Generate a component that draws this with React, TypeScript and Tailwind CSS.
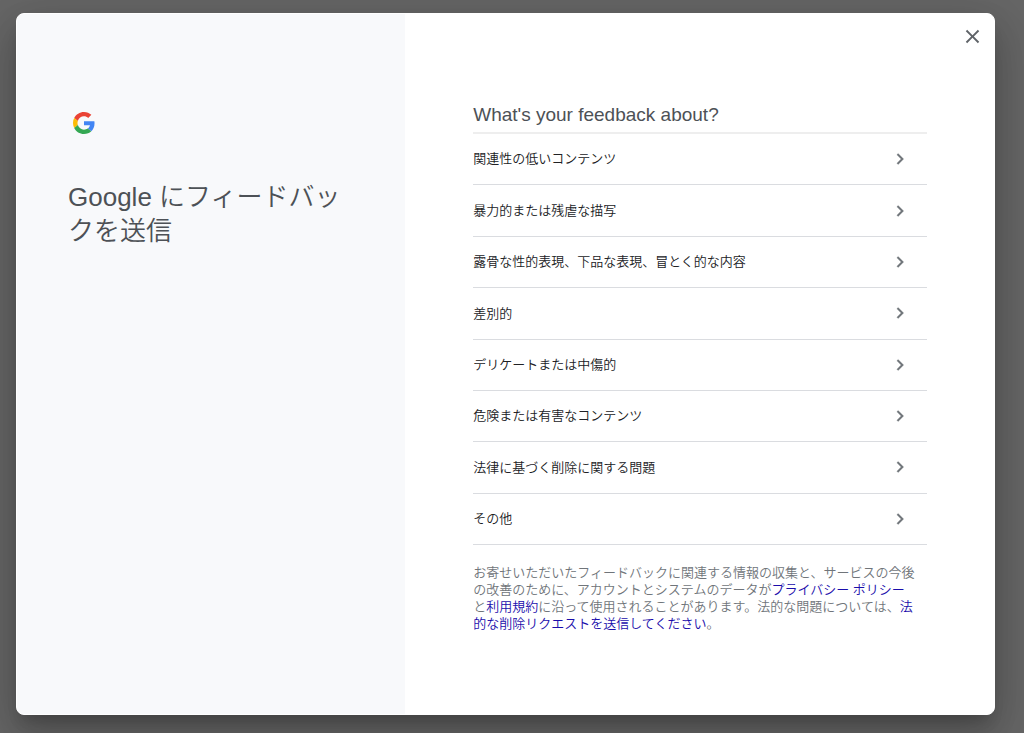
const categories = [
  "関連性の低いコンテンツ",
  "暴力的または残虐な描写",
  "露骨な性的表現、下品な表現、冒とく的な内容",
  "差別的",
  "デリケートまたは中傷的",
  "危険または有害なコンテンツ",
  "法律に基づく削除に関する問題",
  "その他",
]

const GoogleLogo = () => (
  <svg viewBox="0 0 48 48" className="size-[22px]" aria-hidden="true">
    <path fill="#EA4335" d="M24 9.5c3.54 0 6.71 1.22 9.21 3.6l6.85-6.85C35.9 2.38 30.47 0 24 0 14.62 0 6.51 5.38 2.56 13.22l7.98 6.19C12.43 13.72 17.74 9.5 24 9.5z" />
    <path fill="#4285F4" d="M46.98 24.55c0-1.57-.15-3.09-.38-4.55H24v9.02h12.94c-.58 2.96-2.26 5.48-4.78 7.18l7.73 6c4.51-4.18 7.09-10.36 7.09-17.65z" />
    <path fill="#FBBC05" d="M10.53 28.59c-.48-1.45-.76-2.99-.76-4.59s.27-3.14.76-4.59l-7.98-6.19C.92 16.46 0 20.12 0 24c0 3.88.92 7.54 2.56 10.78l7.97-6.19z" />
    <path fill="#34A853" d="M24 48c6.48 0 11.93-2.13 15.89-5.81l-7.73-6c-2.15 1.45-4.92 2.3-8.16 2.3-6.26 0-11.57-4.22-13.47-9.91l-7.98 6.19C6.51 42.62 14.62 48 24 48z" />
  </svg>
)

const ChevronRight = () => (
  <svg viewBox="0 0 24 24" className="size-[22px] shrink-0 fill-[#70757a] stroke-[#70757a] stroke-[0.3]" aria-hidden="true">
    <path d="M10 6L8.59 7.41 13.17 12l-4.58 4.59L10 18l6-6z" />
  </svg>
)

const CloseIcon = () => (
  <svg viewBox="0 0 24 24" className="size-[23px] fill-[#5f6368]" aria-hidden="true">
    <path d="M19 6.41L17.59 5 12 10.59 6.41 5 5 6.41 10.59 12 5 17.59 6.41 19 12 13.41 17.59 19 19 17.59 13.41 12z" />
  </svg>
)

const CategoryItem = ({ label }: { label: string }) => (
  <li className="border-b border-[#dadce0]">
    <button
      type="button"
      className="flex h-full w-full items-center justify-between pr-4 text-left text-[13px] text-[#202124]"
    >
      <span>{label}</span>
      <ChevronRight />
    </button>
  </li>
)

const App = () => {
  return (
    <div
      lang="ja"
      className="flex min-h-screen bg-[#666] pt-[13px] pr-[29px] pb-[18px] pl-4 font-['Liberation_Sans','Noto_Sans_CJK_JP',sans-serif] font-[350]"
    >
      <div
        role="dialog"
        aria-labelledby="feedback-title"
        className="relative grid flex-1 grid-cols-[389fr_590fr] overflow-hidden rounded-lg border border-white bg-white shadow-[0_11px_15px_-7px_rgba(0,0,0,0.2),0_24px_38px_3px_rgba(0,0,0,0.14),0_9px_46px_8px_rgba(0,0,0,0.12)]"
      >
        <aside className="bg-[#f8f9fb] px-[51px] pt-[98px]">
          <div className="pl-[5px]">
            <GoogleLogo />
          </div>
          <h1 id="feedback-title" className="mt-[46px] text-[26px] leading-[34px] font-[350] text-[#4d5156]">
            Google にフィードバックを送信
          </h1>
        </aside>

        <main className="pt-[88px] pr-[67px] pl-[68px]">
          <h2 className="border-b-2 border-[#eee] pb-1 text-[19px] leading-[26px] font-normal text-[#4d5156]">
            What's your feedback about?
          </h2>
          <ul className="grid h-[411px] grid-rows-8">
            {categories.map((label) => (
              <CategoryItem key={label} label={label} />
            ))}
          </ul>
          <p className="mt-[19px] text-[13px] leading-[17px] text-[#70757a]">
            お寄せいただいたフィードバックに関連する情報の収集と、サービスの今後の改善のために、アカウントとシステムのデータが
            <a href="#privacy" className="text-[#1a0dab]">プライバシー ポリシー</a>
            <br />
            と
            <a href="#terms" className="text-[#1a0dab]">利用規約</a>
            に沿って使用されることがあります。法的な問題については、
            <a href="#legal" className="text-[#1a0dab]">法<br />的な削除リクエストを送信してください</a>。
          </p>
        </main>

        <button type="button" aria-label="閉じる" className="absolute top-[11px] right-[10px]">
          <CloseIcon />
        </button>
      </div>
    </div>
  )
}

export default App
